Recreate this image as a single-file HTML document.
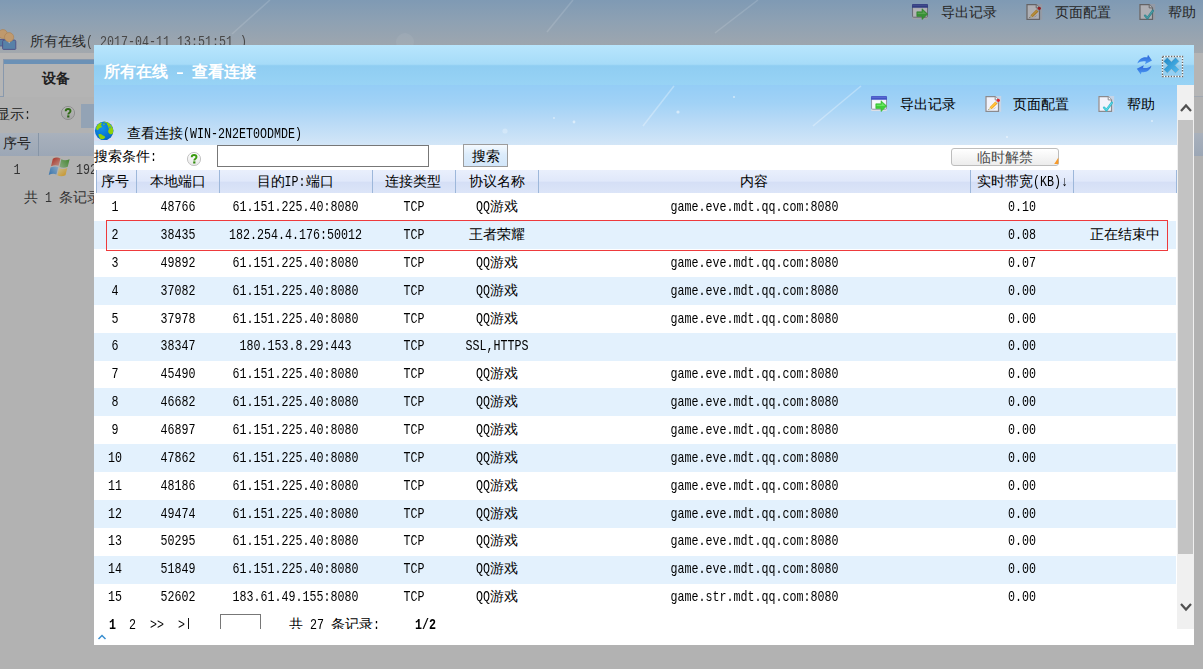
<!DOCTYPE html>
<html><head><meta charset="utf-8"><title>view</title>
<style>
html,body{margin:0;padding:0}
body{width:1203px;height:669px;overflow:hidden;position:relative;background:#b2b2b2;font-family:"Liberation Sans",sans-serif;font-size:14px;color:#000}
.t{position:absolute;white-space:pre;margin:0;padding:0}
.b{position:absolute;box-sizing:border-box}
.l{display:inline-block;font-family:"Liberation Mono",monospace;font-size:0.8334em;transform:scaleY(1.2);transform-origin:50% 72%;white-space:pre}
svg{position:absolute;overflow:visible}
</style></head><body>
<div class="b" style="left:0.00px;top:0.00px;width:1203.00px;height:54.00px;background:linear-gradient(180deg,#7f9ab4 0%,#8ea1b3 40%,#a3a8ad 100%)"></div>
<svg style="left:0;top:0" width="1203" height="53" viewBox="0 0 1203 53"><g stroke="#fff" stroke-width="1.5" opacity=".13"><line x1="573" y1="0" x2="547" y2="32"/><line x1="758" y1="0" x2="715" y2="33"/><line x1="270" y1="0" x2="232" y2="34"/></g><circle cx="405" cy="42" r="9" fill="#fff" opacity=".06"/></svg>
<div class="t " style="top:30.50px;line-height:20px;font-size:14px;color:#2a2a2a;left:30.00px;">所有在线</div>
<div class="t " style="top:30.60px;line-height:20px;font-size:14px;color:#484848;left:86.00px;"><span class="l">( 2017-04-11 13:51:51 )</span></div>
<svg style="left:0.00px;top:28.60px;filter:brightness(.86) saturate(.8)" width="17" height="21" viewBox="0 0 17 21"><g><path d="M-4,10.5 h8.5 v6.5 h-8.5z" fill="#5a94cc" stroke="#5a5aa8" stroke-width="0.8"/><circle cx="2.9" cy="5.0" r="4.5" fill="#e8b070" stroke="#d09450" stroke-width=".6"/><path d="M2.6,12.6 a1.6,1.6 0 0 1 1.6,-1.6 h10 a1.6,1.6 0 0 1 1.6,1.6 v7 a0.8,0.8 0 0 1 -0.8,0.8 h-11.6 a0.8,0.8 0 0 1 -0.8,-0.8z" fill="#5c98d0" stroke="#5a5aa8" stroke-width="0.9"/><path d="M7.6,11.4 l1.6,3.2 l1.6,-3.2z" fill="#e6edf5"/><circle cx="9.1" cy="8.2" r="4.6" fill="#e9b272" stroke="#d09450" stroke-width=".6"/></g></svg>
<svg style="left:912.00px;top:3.80px;filter:brightness(.72) saturate(.85);" width="16.4" height="16.4" viewBox="0 0 17 17"><rect x="0.3" y="13.2" width="16" height="2.4" fill="#dcdfe6"/><rect x="0.5" y="0.5" width="15.6" height="13.2" rx="1" fill="#eef0fa" stroke="#8f93a3" stroke-width="1"/><rect x="2" y="5" width="12" height="7.6" fill="#f7f8fd"/><path d="M0,1.2 a1.2,1.2 0 0 1 1.2,-1.2 h14.2 a1.2,1.2 0 0 1 1.2,1.2 v2.8 h-16.6z" fill="#4254c4"/><rect x="0.6" y="0.6" width="15.4" height="1.4" fill="#5a6ad2"/><path d="M5,8.1 h5.4 v-3.2 l5.9,5.6 l-5.9,5.6 v-3.2 h-5.4z" fill="#3fcf3a" stroke="#2db52a" stroke-width="0.6" stroke-linejoin="round"/><path d="M5.8,9 h5.4 v-2 l3.6,3.5 h-9z" fill="#7df070" opacity=".7"/></svg>
<svg style="left:1026.00px;top:3.80px;filter:brightness(.72) saturate(.85);" width="16.6" height="16" viewBox="0 0 16.6 16"><rect x="10" y="0" width="6.2" height="15.8" fill="#d3d6e2" opacity=".75"/><rect x="0" y="0" width="2" height="15.8" fill="#d3d6e2" opacity=".6"/><path d="M1,0.6 h9.2 l3.3,3.3 v11.4 h-12.5z" fill="#f2f3fb" stroke="#8a8a8e" stroke-width="1.2" stroke-linejoin="miter"/><path d="M10.2,0.6 v3.3 h3.3" fill="#fff" stroke="#8a8a8e" stroke-width="1"/><path d="M4.6,11.3 L10.4,5.5 L12.6,7.6 L6.6,13.3 z" fill="#f6a21a"/><path d="M5.4,11.5 L10.6,6.3 L11.4,7.0 L6.2,12.2 z" fill="#ffd04a"/><path d="M4.6,11.3 L6.6,13.3 L3.4,14.0 z" fill="#e8d9a0"/><path d="M3.4,14.0 L4.3,13.8 L3.7,13.1 z" fill="#333"/><path d="M3.4,14.4 L9.5,13.0 L11.8,10.5 L7.2,13.6z" fill="#9a9aa8" opacity=".55"/><path d="M10.4,5.5 L11.3,4.6 L13.5,6.7 L12.6,7.6z" fill="#c9c9cf"/><circle cx="13.3" cy="4.3" r="1.65" fill="#e4262c"/></svg>
<svg style="left:1139.00px;top:3.80px;filter:brightness(.72) saturate(.85);" width="16.6" height="16" viewBox="0 0 16.6 16"><rect x="10" y="0" width="6.2" height="15.8" fill="#d3d6e2" opacity=".75"/><rect x="0" y="0" width="2" height="15.8" fill="#d3d6e2" opacity=".6"/><path d="M1,0.6 h9.2 l3.3,3.3 v11.4 h-12.5z" fill="#f2f3fb" stroke="#8a8a8e" stroke-width="1.2" stroke-linejoin="miter"/><path d="M10.2,0.6 v3.3 h3.3" fill="#fff" stroke="#8a8a8e" stroke-width="1"/><path d="M6.0,11.6 L8.4,14.3 L13.9,6.8" fill="none" stroke="#35bfd2" stroke-width="2.3" stroke-linecap="round" stroke-linejoin="round"/><path d="M6.3,11.8 L8.4,13.9 L13.5,7.2" fill="none" stroke="#6fe3ea" stroke-width="0.8" stroke-linecap="round" stroke-linejoin="round"/></svg>
<div class="t " style="top:2.00px;line-height:20px;font-size:14px;color:#262626;left:941.00px;">导出记录</div>
<div class="t " style="top:2.00px;line-height:20px;font-size:14px;color:#262626;left:1055.00px;">页面配置</div>
<div class="t " style="top:2.00px;line-height:20px;font-size:14px;color:#262626;left:1168.00px;">帮助</div>
<div class="b" style="left:0.00px;top:53.00px;width:1203.00px;height:44.00px;background:#b5b5b5"></div>
<div class="b" style="left:0.00px;top:96.00px;width:4.00px;height:1.00px;background:#8a9bb0"></div>
<div class="b" style="left:1194.00px;top:96.00px;width:9.00px;height:1.00px;background:#a1a8b1"></div>
<div class="b" style="left:3.00px;top:59.00px;width:100.00px;height:38.00px;background:#b4b4b4;border-left:1px solid #8898ac;border-top:1px solid #8898ac"></div>
<div class="b" style="left:4.00px;top:60.00px;width:100.00px;height:4.00px;background:#6b91b6"></div>
<div class="t " style="top:67.60px;line-height:20px;font-size:14px;color:#222;font-weight:bold;left:-144.00px;width:400px;text-align:center;">设备</div>
<svg style="left:60.00px;top:105.00px;filter:brightness(.72) saturate(.85);" width="16" height="16" viewBox="0 0 16 16"><defs><linearGradient id="qg1" x1="0" y1="0" x2="0" y2="1"><stop offset="0" stop-color="#ffffff"/><stop offset="1" stop-color="#e6e6e6"/></linearGradient></defs><circle cx="8" cy="8" r="6.6" fill="url(#qg1)" stroke="#c4c4c4" stroke-width="1"/><path d="M5.7,6.3 C5.7,4.6 6.8,4.0 8.1,4.0 C9.5,4.0 10.5,4.8 10.5,6.0 C10.5,7.6 8.3,7.7 8.3,9.4" fill="none" stroke="#3a9b10" stroke-width="1.9"/><rect x="7.2" y="10.4" width="2.2" height="2.1" fill="#2f8a0a"/></svg>
<svg style="left:46.50px;top:157.00px;" width="24.5" height="20.5" viewBox="0 0 22 19"><defs><linearGradient id="wr" x1="0" y1="0" x2="1" y2="1"><stop offset="0" stop-color="#a8352a"/><stop offset="1" stop-color="#bd8a80"/></linearGradient><linearGradient id="wg" x1="1" y1="0" x2="0" y2="1"><stop offset="0" stop-color="#43862f"/><stop offset="1" stop-color="#8aa982"/></linearGradient><linearGradient id="wb" x1="0" y1="1" x2="1" y2="0"><stop offset="0" stop-color="#3673ac"/><stop offset="1" stop-color="#8aa8c2"/></linearGradient><linearGradient id="wy" x1="1" y1="1" x2="0" y2="0"><stop offset="0" stop-color="#c8962a"/><stop offset="1" stop-color="#c9b98a"/></linearGradient></defs><g transform="skewX(-12)"><path d="M5.4,1.6 C7.4,0.2 10.2,0.2 12.4,1.4 L12.2,8.2 C10,7.2 7.4,7.4 5.2,8.6z" fill="url(#wr)"/><path d="M13.4,2.2 C15.8,3.4 18.6,3.4 21.0,2.0 L20.8,9.0 C18.4,10.2 15.6,10.2 13.2,9.0z" fill="url(#wg)"/><path d="M5.0,9.8 C7.2,8.6 9.8,8.4 12.0,9.4 L11.8,16.2 C9.6,15.2 7.0,15.4 4.8,16.6z" fill="url(#wb)"/><path d="M13.0,10.2 C15.4,11.4 18.2,11.4 20.6,10.2 L20.4,17.0 C18.0,18.2 15.2,18.2 12.8,17.0z" fill="url(#wy)"/></g></svg>
<div class="t " style="top:104.00px;line-height:20px;font-size:14px;color:#222;left:-4.00px;">显示<span class="l">:</span></div>
<div class="b" style="left:81.00px;top:104.00px;width:14.00px;height:24.00px;background:#93a3b5"></div>
<div class="b" style="left:0.00px;top:133.00px;width:1203.00px;height:23.00px;background:linear-gradient(180deg,#a9b1bc,#9ca7b6)"></div>
<div class="b" style="left:38.00px;top:133.00px;width:1.00px;height:23.00px;background:#8795a6"></div>
<div class="t " style="top:133.00px;line-height:20px;font-size:14px;color:#222;left:3.00px;">序号</div>
<div class="t " style="top:159.00px;line-height:20px;font-size:14px;color:#333;left:-183.00px;width:400px;text-align:center;"><span class="l">1</span></div>
<div class="t " style="top:159.00px;line-height:20px;font-size:14px;color:#333;left:76.00px;"><span class="l">192</span></div>
<div class="t " style="top:187.00px;line-height:20px;font-size:14px;color:#333;left:24.00px;">共<span class="l"> 1 </span>条记录</div>
<div class="b" style="left:94.00px;top:45.00px;width:1100.00px;height:600.00px;background:#fff"></div>
<div class="b" style="left:94.00px;top:45.00px;width:1100.00px;height:40.00px;background:linear-gradient(180deg,#b8e6fd 0%,#a6dbf8 48%,#8fcdf2 52%,#98d3f5 100%)"></div>
<div class="b" style="left:94.00px;top:84.70px;width:1100.00px;height:1.20px;background:#b5e1fa"></div>
<div class="t " style="top:62.00px;line-height:20px;font-size:16px;color:#fff;font-weight:bold;left:104.00px;">所有在线<span class="l"> – </span>查看连接</div>
<div class="b" style="left:94.00px;top:85.00px;width:1083.00px;height:60.00px;background:linear-gradient(180deg,#94cdf6 0%,#a1d2f6 30%,#b9daf6 62%,#d3e6f7 100%)"></div>
<svg style="left:94px;top:85px" width="1083" height="60" viewBox="94 85 1083 60"><g stroke="#fff" stroke-width="1.5" opacity=".3"><line x1="674" y1="86" x2="643" y2="126"/><line x1="861" y1="86" x2="813" y2="126"/></g><g fill="#fff" opacity=".5"><circle cx="678" cy="112" r="1.6"/><circle cx="574" cy="122" r="1.4"/><circle cx="734" cy="97" r="1.1"/><circle cx="505" cy="131" r="2.6" opacity=".5"/><circle cx="554" cy="118" r="0.9"/><circle cx="1152" cy="121" r="1.1"/><circle cx="1007" cy="137" r="1.1"/></g></svg>
<div class="t " style="top:94.00px;line-height:20px;font-size:14px;color:#000;left:900.00px;">导出记录</div>
<div class="t " style="top:94.00px;line-height:20px;font-size:14px;color:#000;left:1013.00px;">页面配置</div>
<div class="t " style="top:94.00px;line-height:20px;font-size:14px;color:#000;left:1127.00px;">帮助</div>
<div class="t " style="top:123.00px;line-height:20px;font-size:14px;color:#000;left:127.00px;">查看连接<span class="l">(WIN-2N2ET0ODMDE)</span></div>
<div class="t " style="top:146.00px;line-height:20px;font-size:14px;color:#000;left:94.00px;">搜索条件<span class="l">:</span></div>
<div class="b" style="left:217.00px;top:145.00px;width:212.00px;height:22.00px;background:#fff;border:1px solid #777"></div>
<div class="b" style="left:463.00px;top:144.40px;width:45.00px;height:23.00px;background:linear-gradient(180deg,#f5fafe 0%,#dcecfb 45%,#d2e6f9 100%);border:1px solid #9c9c9c"></div>
<div class="t " style="top:146.00px;line-height:20px;font-size:14px;color:#000;left:285.50px;width:400px;text-align:center;">搜索</div>
<div class="b" style="left:951.00px;top:148.00px;width:108.00px;height:18.00px;background:linear-gradient(180deg,#fff,#ececec);border:1px solid #bdbdbd;border-radius:3px"></div>
<div class="t " style="top:147.00px;line-height:20px;font-size:14px;color:#4c4c4c;left:804.50px;width:400px;text-align:center;">临时解禁</div>
<div class="b" style="left:96.00px;top:170.00px;width:1081.00px;height:23.00px;background:linear-gradient(180deg,#e9effc 0%,#e0e8fa 48%,#d5dff6 54%,#dce5f8 100%)"></div>
<div class="b" style="left:95.50px;top:170.00px;width:1.00px;height:23.00px;background:#9db7da"></div>
<div class="b" style="left:136.20px;top:170.00px;width:1.00px;height:23.00px;background:#9db7da"></div>
<div class="b" style="left:218.80px;top:170.00px;width:1.00px;height:23.00px;background:#9db7da"></div>
<div class="b" style="left:371.70px;top:170.00px;width:1.00px;height:23.00px;background:#9db7da"></div>
<div class="b" style="left:454.70px;top:170.00px;width:1.00px;height:23.00px;background:#9db7da"></div>
<div class="b" style="left:537.70px;top:170.00px;width:1.00px;height:23.00px;background:#9db7da"></div>
<div class="b" style="left:970.00px;top:170.00px;width:1.00px;height:23.00px;background:#9db7da"></div>
<div class="b" style="left:1073.00px;top:170.00px;width:1.00px;height:23.00px;background:#9db7da"></div>
<div class="b" style="left:1175.90px;top:170.00px;width:1.00px;height:23.00px;background:#9db7da"></div>
<div class="t " style="top:171.00px;line-height:20px;font-size:14px;color:#000;left:-85.00px;width:400px;text-align:center;">序号</div>
<div class="t " style="top:171.00px;line-height:20px;font-size:14px;color:#000;left:-22.00px;width:400px;text-align:center;">本地端口</div>
<div class="t " style="top:171.00px;line-height:20px;font-size:14px;color:#000;left:95.00px;width:400px;text-align:center;">目的<span class="l">IP:</span>端口</div>
<div class="t " style="top:171.00px;line-height:20px;font-size:14px;color:#000;left:213.00px;width:400px;text-align:center;">连接类型</div>
<div class="t " style="top:171.00px;line-height:20px;font-size:14px;color:#000;left:297.00px;width:400px;text-align:center;">协议名称</div>
<div class="t " style="top:171.00px;line-height:20px;font-size:14px;color:#000;left:554.00px;width:400px;text-align:center;">内容</div>
<div class="t " style="top:171.00px;line-height:20px;font-size:14px;color:#000;left:977.00px;">实时带宽<span class="l">(KB)↓</span></div>
<div class="t " style="top:196.10px;line-height:20px;font-size:14px;color:#000;left:-85.00px;width:400px;text-align:center;"><span class="l">1</span></div>
<div class="t " style="top:196.10px;line-height:20px;font-size:14px;color:#000;left:-22.00px;width:400px;text-align:center;"><span class="l">48766</span></div>
<div class="t " style="top:196.10px;line-height:20px;font-size:14px;color:#000;left:95.50px;width:400px;text-align:center;"><span class="l">61.151.225.40:8080</span></div>
<div class="t " style="top:196.10px;line-height:20px;font-size:14px;color:#000;left:214.00px;width:400px;text-align:center;"><span class="l">TCP</span></div>
<div class="t " style="top:196.10px;line-height:20px;font-size:14px;color:#000;left:297.00px;width:400px;text-align:center;"><span class="l">QQ</span>游戏</div>
<div class="t " style="top:196.10px;line-height:20px;font-size:14px;color:#000;left:554.50px;width:400px;text-align:center;"><span class="l">game.eve.mdt.qq.com:8080</span></div>
<div class="t " style="top:196.10px;line-height:20px;font-size:14px;color:#000;left:822.00px;width:400px;text-align:center;"><span class="l">0.10</span></div>
<div class="b" style="left:94.00px;top:220.90px;width:1082.00px;height:28.00px;background:#e3f1fd"></div>
<div class="t " style="top:223.96px;line-height:20px;font-size:14px;color:#000;left:-85.00px;width:400px;text-align:center;"><span class="l">2</span></div>
<div class="t " style="top:223.96px;line-height:20px;font-size:14px;color:#000;left:-22.00px;width:400px;text-align:center;"><span class="l">38435</span></div>
<div class="t " style="top:223.96px;line-height:20px;font-size:14px;color:#000;left:95.50px;width:400px;text-align:center;"><span class="l">182.254.4.176:50012</span></div>
<div class="t " style="top:223.96px;line-height:20px;font-size:14px;color:#000;left:214.00px;width:400px;text-align:center;"><span class="l">TCP</span></div>
<div class="t " style="top:223.96px;line-height:20px;font-size:14px;color:#000;left:297.00px;width:400px;text-align:center;">王者荣耀</div>
<div class="t " style="top:223.96px;line-height:20px;font-size:14px;color:#000;left:554.50px;width:400px;text-align:center;"></div>
<div class="t " style="top:223.96px;line-height:20px;font-size:14px;color:#000;left:822.00px;width:400px;text-align:center;"><span class="l">0.08</span></div>
<div class="t " style="top:223.96px;line-height:20px;font-size:14px;color:#000;left:925.00px;width:400px;text-align:center;">正在结束中</div>
<div class="t " style="top:251.82px;line-height:20px;font-size:14px;color:#000;left:-85.00px;width:400px;text-align:center;"><span class="l">3</span></div>
<div class="t " style="top:251.82px;line-height:20px;font-size:14px;color:#000;left:-22.00px;width:400px;text-align:center;"><span class="l">49892</span></div>
<div class="t " style="top:251.82px;line-height:20px;font-size:14px;color:#000;left:95.50px;width:400px;text-align:center;"><span class="l">61.151.225.40:8080</span></div>
<div class="t " style="top:251.82px;line-height:20px;font-size:14px;color:#000;left:214.00px;width:400px;text-align:center;"><span class="l">TCP</span></div>
<div class="t " style="top:251.82px;line-height:20px;font-size:14px;color:#000;left:297.00px;width:400px;text-align:center;"><span class="l">QQ</span>游戏</div>
<div class="t " style="top:251.82px;line-height:20px;font-size:14px;color:#000;left:554.50px;width:400px;text-align:center;"><span class="l">game.eve.mdt.qq.com:8080</span></div>
<div class="t " style="top:251.82px;line-height:20px;font-size:14px;color:#000;left:822.00px;width:400px;text-align:center;"><span class="l">0.07</span></div>
<div class="b" style="left:94.00px;top:276.70px;width:1082.00px;height:28.00px;background:#e3f1fd"></div>
<div class="t " style="top:279.68px;line-height:20px;font-size:14px;color:#000;left:-85.00px;width:400px;text-align:center;"><span class="l">4</span></div>
<div class="t " style="top:279.68px;line-height:20px;font-size:14px;color:#000;left:-22.00px;width:400px;text-align:center;"><span class="l">37082</span></div>
<div class="t " style="top:279.68px;line-height:20px;font-size:14px;color:#000;left:95.50px;width:400px;text-align:center;"><span class="l">61.151.225.40:8080</span></div>
<div class="t " style="top:279.68px;line-height:20px;font-size:14px;color:#000;left:214.00px;width:400px;text-align:center;"><span class="l">TCP</span></div>
<div class="t " style="top:279.68px;line-height:20px;font-size:14px;color:#000;left:297.00px;width:400px;text-align:center;"><span class="l">QQ</span>游戏</div>
<div class="t " style="top:279.68px;line-height:20px;font-size:14px;color:#000;left:554.50px;width:400px;text-align:center;"><span class="l">game.eve.mdt.qq.com:8080</span></div>
<div class="t " style="top:279.68px;line-height:20px;font-size:14px;color:#000;left:822.00px;width:400px;text-align:center;"><span class="l">0.00</span></div>
<div class="t " style="top:307.54px;line-height:20px;font-size:14px;color:#000;left:-85.00px;width:400px;text-align:center;"><span class="l">5</span></div>
<div class="t " style="top:307.54px;line-height:20px;font-size:14px;color:#000;left:-22.00px;width:400px;text-align:center;"><span class="l">37978</span></div>
<div class="t " style="top:307.54px;line-height:20px;font-size:14px;color:#000;left:95.50px;width:400px;text-align:center;"><span class="l">61.151.225.40:8080</span></div>
<div class="t " style="top:307.54px;line-height:20px;font-size:14px;color:#000;left:214.00px;width:400px;text-align:center;"><span class="l">TCP</span></div>
<div class="t " style="top:307.54px;line-height:20px;font-size:14px;color:#000;left:297.00px;width:400px;text-align:center;"><span class="l">QQ</span>游戏</div>
<div class="t " style="top:307.54px;line-height:20px;font-size:14px;color:#000;left:554.50px;width:400px;text-align:center;"><span class="l">game.eve.mdt.qq.com:8080</span></div>
<div class="t " style="top:307.54px;line-height:20px;font-size:14px;color:#000;left:822.00px;width:400px;text-align:center;"><span class="l">0.00</span></div>
<div class="b" style="left:94.00px;top:332.50px;width:1082.00px;height:28.00px;background:#e3f1fd"></div>
<div class="t " style="top:335.40px;line-height:20px;font-size:14px;color:#000;left:-85.00px;width:400px;text-align:center;"><span class="l">6</span></div>
<div class="t " style="top:335.40px;line-height:20px;font-size:14px;color:#000;left:-22.00px;width:400px;text-align:center;"><span class="l">38347</span></div>
<div class="t " style="top:335.40px;line-height:20px;font-size:14px;color:#000;left:95.50px;width:400px;text-align:center;"><span class="l">180.153.8.29:443</span></div>
<div class="t " style="top:335.40px;line-height:20px;font-size:14px;color:#000;left:214.00px;width:400px;text-align:center;"><span class="l">TCP</span></div>
<div class="t " style="top:335.40px;line-height:20px;font-size:14px;color:#000;left:297.00px;width:400px;text-align:center;"><span class="l">SSL,HTTPS</span></div>
<div class="t " style="top:335.40px;line-height:20px;font-size:14px;color:#000;left:554.50px;width:400px;text-align:center;"></div>
<div class="t " style="top:335.40px;line-height:20px;font-size:14px;color:#000;left:822.00px;width:400px;text-align:center;"><span class="l">0.00</span></div>
<div class="t " style="top:363.26px;line-height:20px;font-size:14px;color:#000;left:-85.00px;width:400px;text-align:center;"><span class="l">7</span></div>
<div class="t " style="top:363.26px;line-height:20px;font-size:14px;color:#000;left:-22.00px;width:400px;text-align:center;"><span class="l">45490</span></div>
<div class="t " style="top:363.26px;line-height:20px;font-size:14px;color:#000;left:95.50px;width:400px;text-align:center;"><span class="l">61.151.225.40:8080</span></div>
<div class="t " style="top:363.26px;line-height:20px;font-size:14px;color:#000;left:214.00px;width:400px;text-align:center;"><span class="l">TCP</span></div>
<div class="t " style="top:363.26px;line-height:20px;font-size:14px;color:#000;left:297.00px;width:400px;text-align:center;"><span class="l">QQ</span>游戏</div>
<div class="t " style="top:363.26px;line-height:20px;font-size:14px;color:#000;left:554.50px;width:400px;text-align:center;"><span class="l">game.eve.mdt.qq.com:8080</span></div>
<div class="t " style="top:363.26px;line-height:20px;font-size:14px;color:#000;left:822.00px;width:400px;text-align:center;"><span class="l">0.00</span></div>
<div class="b" style="left:94.00px;top:388.30px;width:1082.00px;height:28.00px;background:#e3f1fd"></div>
<div class="t " style="top:391.12px;line-height:20px;font-size:14px;color:#000;left:-85.00px;width:400px;text-align:center;"><span class="l">8</span></div>
<div class="t " style="top:391.12px;line-height:20px;font-size:14px;color:#000;left:-22.00px;width:400px;text-align:center;"><span class="l">46682</span></div>
<div class="t " style="top:391.12px;line-height:20px;font-size:14px;color:#000;left:95.50px;width:400px;text-align:center;"><span class="l">61.151.225.40:8080</span></div>
<div class="t " style="top:391.12px;line-height:20px;font-size:14px;color:#000;left:214.00px;width:400px;text-align:center;"><span class="l">TCP</span></div>
<div class="t " style="top:391.12px;line-height:20px;font-size:14px;color:#000;left:297.00px;width:400px;text-align:center;"><span class="l">QQ</span>游戏</div>
<div class="t " style="top:391.12px;line-height:20px;font-size:14px;color:#000;left:554.50px;width:400px;text-align:center;"><span class="l">game.eve.mdt.qq.com:8080</span></div>
<div class="t " style="top:391.12px;line-height:20px;font-size:14px;color:#000;left:822.00px;width:400px;text-align:center;"><span class="l">0.00</span></div>
<div class="t " style="top:418.98px;line-height:20px;font-size:14px;color:#000;left:-85.00px;width:400px;text-align:center;"><span class="l">9</span></div>
<div class="t " style="top:418.98px;line-height:20px;font-size:14px;color:#000;left:-22.00px;width:400px;text-align:center;"><span class="l">46897</span></div>
<div class="t " style="top:418.98px;line-height:20px;font-size:14px;color:#000;left:95.50px;width:400px;text-align:center;"><span class="l">61.151.225.40:8080</span></div>
<div class="t " style="top:418.98px;line-height:20px;font-size:14px;color:#000;left:214.00px;width:400px;text-align:center;"><span class="l">TCP</span></div>
<div class="t " style="top:418.98px;line-height:20px;font-size:14px;color:#000;left:297.00px;width:400px;text-align:center;"><span class="l">QQ</span>游戏</div>
<div class="t " style="top:418.98px;line-height:20px;font-size:14px;color:#000;left:554.50px;width:400px;text-align:center;"><span class="l">game.eve.mdt.qq.com:8080</span></div>
<div class="t " style="top:418.98px;line-height:20px;font-size:14px;color:#000;left:822.00px;width:400px;text-align:center;"><span class="l">0.00</span></div>
<div class="b" style="left:94.00px;top:444.10px;width:1082.00px;height:28.00px;background:#e3f1fd"></div>
<div class="t " style="top:446.84px;line-height:20px;font-size:14px;color:#000;left:-85.00px;width:400px;text-align:center;"><span class="l">10</span></div>
<div class="t " style="top:446.84px;line-height:20px;font-size:14px;color:#000;left:-22.00px;width:400px;text-align:center;"><span class="l">47862</span></div>
<div class="t " style="top:446.84px;line-height:20px;font-size:14px;color:#000;left:95.50px;width:400px;text-align:center;"><span class="l">61.151.225.40:8080</span></div>
<div class="t " style="top:446.84px;line-height:20px;font-size:14px;color:#000;left:214.00px;width:400px;text-align:center;"><span class="l">TCP</span></div>
<div class="t " style="top:446.84px;line-height:20px;font-size:14px;color:#000;left:297.00px;width:400px;text-align:center;"><span class="l">QQ</span>游戏</div>
<div class="t " style="top:446.84px;line-height:20px;font-size:14px;color:#000;left:554.50px;width:400px;text-align:center;"><span class="l">game.eve.mdt.qq.com:8080</span></div>
<div class="t " style="top:446.84px;line-height:20px;font-size:14px;color:#000;left:822.00px;width:400px;text-align:center;"><span class="l">0.00</span></div>
<div class="t " style="top:474.70px;line-height:20px;font-size:14px;color:#000;left:-85.00px;width:400px;text-align:center;"><span class="l">11</span></div>
<div class="t " style="top:474.70px;line-height:20px;font-size:14px;color:#000;left:-22.00px;width:400px;text-align:center;"><span class="l">48186</span></div>
<div class="t " style="top:474.70px;line-height:20px;font-size:14px;color:#000;left:95.50px;width:400px;text-align:center;"><span class="l">61.151.225.40:8080</span></div>
<div class="t " style="top:474.70px;line-height:20px;font-size:14px;color:#000;left:214.00px;width:400px;text-align:center;"><span class="l">TCP</span></div>
<div class="t " style="top:474.70px;line-height:20px;font-size:14px;color:#000;left:297.00px;width:400px;text-align:center;"><span class="l">QQ</span>游戏</div>
<div class="t " style="top:474.70px;line-height:20px;font-size:14px;color:#000;left:554.50px;width:400px;text-align:center;"><span class="l">game.eve.mdt.qq.com:8080</span></div>
<div class="t " style="top:474.70px;line-height:20px;font-size:14px;color:#000;left:822.00px;width:400px;text-align:center;"><span class="l">0.00</span></div>
<div class="b" style="left:94.00px;top:499.90px;width:1082.00px;height:28.00px;background:#e3f1fd"></div>
<div class="t " style="top:502.56px;line-height:20px;font-size:14px;color:#000;left:-85.00px;width:400px;text-align:center;"><span class="l">12</span></div>
<div class="t " style="top:502.56px;line-height:20px;font-size:14px;color:#000;left:-22.00px;width:400px;text-align:center;"><span class="l">49474</span></div>
<div class="t " style="top:502.56px;line-height:20px;font-size:14px;color:#000;left:95.50px;width:400px;text-align:center;"><span class="l">61.151.225.40:8080</span></div>
<div class="t " style="top:502.56px;line-height:20px;font-size:14px;color:#000;left:214.00px;width:400px;text-align:center;"><span class="l">TCP</span></div>
<div class="t " style="top:502.56px;line-height:20px;font-size:14px;color:#000;left:297.00px;width:400px;text-align:center;"><span class="l">QQ</span>游戏</div>
<div class="t " style="top:502.56px;line-height:20px;font-size:14px;color:#000;left:554.50px;width:400px;text-align:center;"><span class="l">game.eve.mdt.qq.com:8080</span></div>
<div class="t " style="top:502.56px;line-height:20px;font-size:14px;color:#000;left:822.00px;width:400px;text-align:center;"><span class="l">0.00</span></div>
<div class="t " style="top:530.42px;line-height:20px;font-size:14px;color:#000;left:-85.00px;width:400px;text-align:center;"><span class="l">13</span></div>
<div class="t " style="top:530.42px;line-height:20px;font-size:14px;color:#000;left:-22.00px;width:400px;text-align:center;"><span class="l">50295</span></div>
<div class="t " style="top:530.42px;line-height:20px;font-size:14px;color:#000;left:95.50px;width:400px;text-align:center;"><span class="l">61.151.225.40:8080</span></div>
<div class="t " style="top:530.42px;line-height:20px;font-size:14px;color:#000;left:214.00px;width:400px;text-align:center;"><span class="l">TCP</span></div>
<div class="t " style="top:530.42px;line-height:20px;font-size:14px;color:#000;left:297.00px;width:400px;text-align:center;"><span class="l">QQ</span>游戏</div>
<div class="t " style="top:530.42px;line-height:20px;font-size:14px;color:#000;left:554.50px;width:400px;text-align:center;"><span class="l">game.eve.mdt.qq.com:8080</span></div>
<div class="t " style="top:530.42px;line-height:20px;font-size:14px;color:#000;left:822.00px;width:400px;text-align:center;"><span class="l">0.00</span></div>
<div class="b" style="left:94.00px;top:555.70px;width:1082.00px;height:28.00px;background:#e3f1fd"></div>
<div class="t " style="top:558.28px;line-height:20px;font-size:14px;color:#000;left:-85.00px;width:400px;text-align:center;"><span class="l">14</span></div>
<div class="t " style="top:558.28px;line-height:20px;font-size:14px;color:#000;left:-22.00px;width:400px;text-align:center;"><span class="l">51849</span></div>
<div class="t " style="top:558.28px;line-height:20px;font-size:14px;color:#000;left:95.50px;width:400px;text-align:center;"><span class="l">61.151.225.40:8080</span></div>
<div class="t " style="top:558.28px;line-height:20px;font-size:14px;color:#000;left:214.00px;width:400px;text-align:center;"><span class="l">TCP</span></div>
<div class="t " style="top:558.28px;line-height:20px;font-size:14px;color:#000;left:297.00px;width:400px;text-align:center;"><span class="l">QQ</span>游戏</div>
<div class="t " style="top:558.28px;line-height:20px;font-size:14px;color:#000;left:554.50px;width:400px;text-align:center;"><span class="l">game.eve.mdt.qq.com:8080</span></div>
<div class="t " style="top:558.28px;line-height:20px;font-size:14px;color:#000;left:822.00px;width:400px;text-align:center;"><span class="l">0.00</span></div>
<div class="t " style="top:586.14px;line-height:20px;font-size:14px;color:#000;left:-85.00px;width:400px;text-align:center;"><span class="l">15</span></div>
<div class="t " style="top:586.14px;line-height:20px;font-size:14px;color:#000;left:-22.00px;width:400px;text-align:center;"><span class="l">52602</span></div>
<div class="t " style="top:586.14px;line-height:20px;font-size:14px;color:#000;left:95.50px;width:400px;text-align:center;"><span class="l">183.61.49.155:8080</span></div>
<div class="t " style="top:586.14px;line-height:20px;font-size:14px;color:#000;left:214.00px;width:400px;text-align:center;"><span class="l">TCP</span></div>
<div class="t " style="top:586.14px;line-height:20px;font-size:14px;color:#000;left:297.00px;width:400px;text-align:center;"><span class="l">QQ</span>游戏</div>
<div class="t " style="top:586.14px;line-height:20px;font-size:14px;color:#000;left:554.50px;width:400px;text-align:center;"><span class="l">game.str.mdt.qq.com:8080</span></div>
<div class="t " style="top:586.14px;line-height:20px;font-size:14px;color:#000;left:822.00px;width:400px;text-align:center;"><span class="l">0.00</span></div>
<div class="b" style="left:106.00px;top:219.70px;width:1062.30px;height:31.30px;border:1.3px solid #ee3a3c"></div>
<div class="b" style="left:94px;top:606px;width:1083px;height:23px;overflow:hidden">
<div class="t " style="top:8.00px;line-height:20px;font-size:14px;color:#000;font-weight:bold;left:15.00px;"><span class="l">1</span></div>
<div class="t " style="top:8.00px;line-height:20px;font-size:14px;color:#000;left:35.00px;"><span class="l">2</span></div>
<div class="t " style="top:8.00px;line-height:20px;font-size:14px;color:#000;left:56.00px;"><span class="l">>></span></div>
<div class="t " style="top:8.00px;line-height:20px;font-size:14px;color:#000;left:84.00px;"><span class="l">>|</span></div>
<div class="b" style="left:126.00px;top:8.00px;width:41.00px;height:24.00px;border:1px solid #777;background:#fff"></div>
<div class="t " style="top:8.00px;line-height:20px;font-size:14px;color:#000;left:195.00px;">共<span class="l"> 27 </span>条记录<span class="l">:</span></div>
<div class="t " style="top:8.00px;line-height:20px;font-size:14px;color:#000;font-weight:bold;left:321.00px;"><span class="l">1/2</span></div>
</div>
<svg style="left:97px;top:634px" width="10" height="6" viewBox="0 0 10 6"><path d="M1.5,5 L5,1.5 L8.5,5" fill="none" stroke="#3a8fd0" stroke-width="1.5"/></svg>
<div class="b" style="left:1177.00px;top:85.00px;width:17.00px;height:544.00px;background:#f0f0f0"></div>
<div class="b" style="left:1178.00px;top:120.00px;width:15.00px;height:434.00px;background:#c3c3c3"></div>
<svg style="left:1178.50px;top:103.00px" width="14" height="10" viewBox="-7 -5 14 10"><path d="M-5,3 L0,-2.6 L5,3" fill="none" stroke="#505050" stroke-width="2.2"/></svg>
<svg style="left:1178.50px;top:602.00px" width="14" height="10" viewBox="-7 -5 14 10"><path d="M-5,-3 L0,2.6 L5,-3" fill="none" stroke="#505050" stroke-width="2.2"/></svg>
<svg style="left:1136.60px;top:55.30px;" width="15" height="19.5" viewBox="0 0 15 19.5"><defs><linearGradient id="rg" x1="0" y1="0" x2="0" y2="1"><stop offset="0" stop-color="#2a62d8"/><stop offset="1" stop-color="#4d9df4"/></linearGradient></defs><path d="M0.4,8.6 C1.4,4.0 6.0,1.4 10.2,2.4 L11.0,-0.2 L15.0,5.6 L8.0,9.2 L8.9,6.6 C6.0,5.8 3.0,6.6 0.4,8.6z" fill="url(#rg)"/><path d="M14.4,10.8 C13.4,15.4 8.8,18.0 4.6,17.0 L3.8,19.6 L-0.2,13.8 L6.8,10.2 L5.9,12.8 C8.8,13.6 11.8,12.8 14.4,10.8z" fill="url(#rg)"/></svg>
<svg style="left:1162.00px;top:56.00px;" width="21" height="21" viewBox="0 0 21 21"><defs><linearGradient id="xg" x1="0" y1="0" x2="1" y2="1"><stop offset="0" stop-color="#1d86c4"/><stop offset="1" stop-color="#58bdf0"/></linearGradient></defs><rect x="0.5" y="0.5" width="20" height="20" fill="none" stroke="#fff" stroke-width="1.4"/><rect x="0.5" y="0.5" width="20" height="20" fill="none" stroke="#666" stroke-width="1.4" stroke-dasharray="1.4,1.4"/><path d="M5.26,1.37 L9.40,5.51 L13.54,1.37 L17.43,5.26 L13.29,9.40 L17.43,13.54 L13.54,17.43 L9.40,13.29 L5.26,17.43 L1.37,13.54 L5.51,9.40 L1.37,5.26z" fill="url(#xg)" stroke="#b8c4cc" stroke-width="0.7"/></svg>
<svg style="left:870.80px;top:95.80px;" width="16.4" height="16.4" viewBox="0 0 17 17"><rect x="0.3" y="13.2" width="16" height="2.4" fill="#dcdfe6"/><rect x="0.5" y="0.5" width="15.6" height="13.2" rx="1" fill="#eef0fa" stroke="#8f93a3" stroke-width="1"/><rect x="2" y="5" width="12" height="7.6" fill="#f7f8fd"/><path d="M0,1.2 a1.2,1.2 0 0 1 1.2,-1.2 h14.2 a1.2,1.2 0 0 1 1.2,1.2 v2.8 h-16.6z" fill="#4254c4"/><rect x="0.6" y="0.6" width="15.4" height="1.4" fill="#5a6ad2"/><path d="M5,8.1 h5.4 v-3.2 l5.9,5.6 l-5.9,5.6 v-3.2 h-5.4z" fill="#3fcf3a" stroke="#2db52a" stroke-width="0.6" stroke-linejoin="round"/><path d="M5.8,9 h5.4 v-2 l3.6,3.5 h-9z" fill="#7df070" opacity=".7"/></svg>
<svg style="left:985.00px;top:95.90px;" width="16.6" height="16" viewBox="0 0 16.6 16"><rect x="10" y="0" width="6.2" height="15.8" fill="#d3d6e2" opacity=".75"/><rect x="0" y="0" width="2" height="15.8" fill="#d3d6e2" opacity=".6"/><path d="M1,0.6 h9.2 l3.3,3.3 v11.4 h-12.5z" fill="#f2f3fb" stroke="#8a8a8e" stroke-width="1.2" stroke-linejoin="miter"/><path d="M10.2,0.6 v3.3 h3.3" fill="#fff" stroke="#8a8a8e" stroke-width="1"/><path d="M4.6,11.3 L10.4,5.5 L12.6,7.6 L6.6,13.3 z" fill="#f6a21a"/><path d="M5.4,11.5 L10.6,6.3 L11.4,7.0 L6.2,12.2 z" fill="#ffd04a"/><path d="M4.6,11.3 L6.6,13.3 L3.4,14.0 z" fill="#e8d9a0"/><path d="M3.4,14.0 L4.3,13.8 L3.7,13.1 z" fill="#333"/><path d="M3.4,14.4 L9.5,13.0 L11.8,10.5 L7.2,13.6z" fill="#9a9aa8" opacity=".55"/><path d="M10.4,5.5 L11.3,4.6 L13.5,6.7 L12.6,7.6z" fill="#c9c9cf"/><circle cx="13.3" cy="4.3" r="1.65" fill="#e4262c"/></svg>
<svg style="left:1098.00px;top:95.90px;" width="16.6" height="16" viewBox="0 0 16.6 16"><rect x="10" y="0" width="6.2" height="15.8" fill="#d3d6e2" opacity=".75"/><rect x="0" y="0" width="2" height="15.8" fill="#d3d6e2" opacity=".6"/><path d="M1,0.6 h9.2 l3.3,3.3 v11.4 h-12.5z" fill="#f2f3fb" stroke="#8a8a8e" stroke-width="1.2" stroke-linejoin="miter"/><path d="M10.2,0.6 v3.3 h3.3" fill="#fff" stroke="#8a8a8e" stroke-width="1"/><path d="M6.0,11.6 L8.4,14.3 L13.9,6.8" fill="none" stroke="#35bfd2" stroke-width="2.3" stroke-linecap="round" stroke-linejoin="round"/><path d="M6.3,11.8 L8.4,13.9 L13.5,7.2" fill="none" stroke="#6fe3ea" stroke-width="0.8" stroke-linecap="round" stroke-linejoin="round"/></svg>
<svg style="left:94.20px;top:121.00px;" width="20" height="20" viewBox="0 0 20 20"><rect x="0" y="0" width="20" height="20" fill="#ddd9ee" opacity=".55"/><defs><radialGradient id="gg" cx="40%" cy="35%" r="70%"><stop offset="0" stop-color="#1392ea"/><stop offset="1" stop-color="#0367c4"/></radialGradient><clipPath id="gc"><circle cx="10.2" cy="9.8" r="9.2"/></clipPath></defs><circle cx="10.2" cy="9.8" r="9.3" fill="url(#gg)"/><g clip-path="url(#gc)" fill="#8fd108"><path d="M2.2,6.5 C3,3.5 5.5,1.8 7.5,1.6 C8.3,2.4 7.4,3.6 6.6,4.2 C7.8,4.8 8.6,6 7.2,6.6 C6,7 5,7.4 4.4,8.6 C3.6,9.6 2.6,9.2 2.2,8 z"/><path d="M8.6,0.4 C10.6,-0.2 13.4,0.6 15.6,2.4 C17.8,4.4 19.4,7 19.6,9.8 C19.4,12 18.6,13.4 17.4,13.2 C16.2,13.6 15.2,12.8 14.6,11.8 C13.8,10.6 14.2,9 15.2,8 C14.4,7.2 13.8,6.2 14.2,5 C13,4.2 12.6,2.8 13,2 C11.6,1.6 9.6,1.4 8.6,0.4z"/><path d="M4.4,13.4 C5.6,12.6 7.4,13.2 8.6,14.2 C10,14.8 11.4,15.4 11.2,16.4 C10.4,17.6 8.6,18.6 7.2,18.8 C6,17.6 4.6,15.6 4.4,13.4z"/><circle cx="9.9" cy="3.2" r="0.8"/></g><ellipse cx="15.8" cy="6.4" rx="1.3" ry="0.8" fill="#2a90d8" opacity=".8"/></svg>
<svg style="left:186.00px;top:150.80px;" width="16" height="16" viewBox="0 0 16 16"><defs><linearGradient id="qg0" x1="0" y1="0" x2="0" y2="1"><stop offset="0" stop-color="#ffffff"/><stop offset="1" stop-color="#e6e6e6"/></linearGradient></defs><circle cx="8" cy="8" r="6.6" fill="url(#qg0)" stroke="#c4c4c4" stroke-width="1"/><path d="M5.7,6.3 C5.7,4.6 6.8,4.0 8.1,4.0 C9.5,4.0 10.5,4.8 10.5,6.0 C10.5,7.6 8.3,7.7 8.3,9.4" fill="none" stroke="#3a9b10" stroke-width="1.9"/><rect x="7.2" y="10.4" width="2.2" height="2.1" fill="#2f8a0a"/></svg>
<svg style="left:1053px;top:156px" width="6" height="9" viewBox="0 0 6 9"><path d="M5.4,1.5 L5.4,8 L1.2,8z" fill="#f79a2a"/></svg>
</body></html>
